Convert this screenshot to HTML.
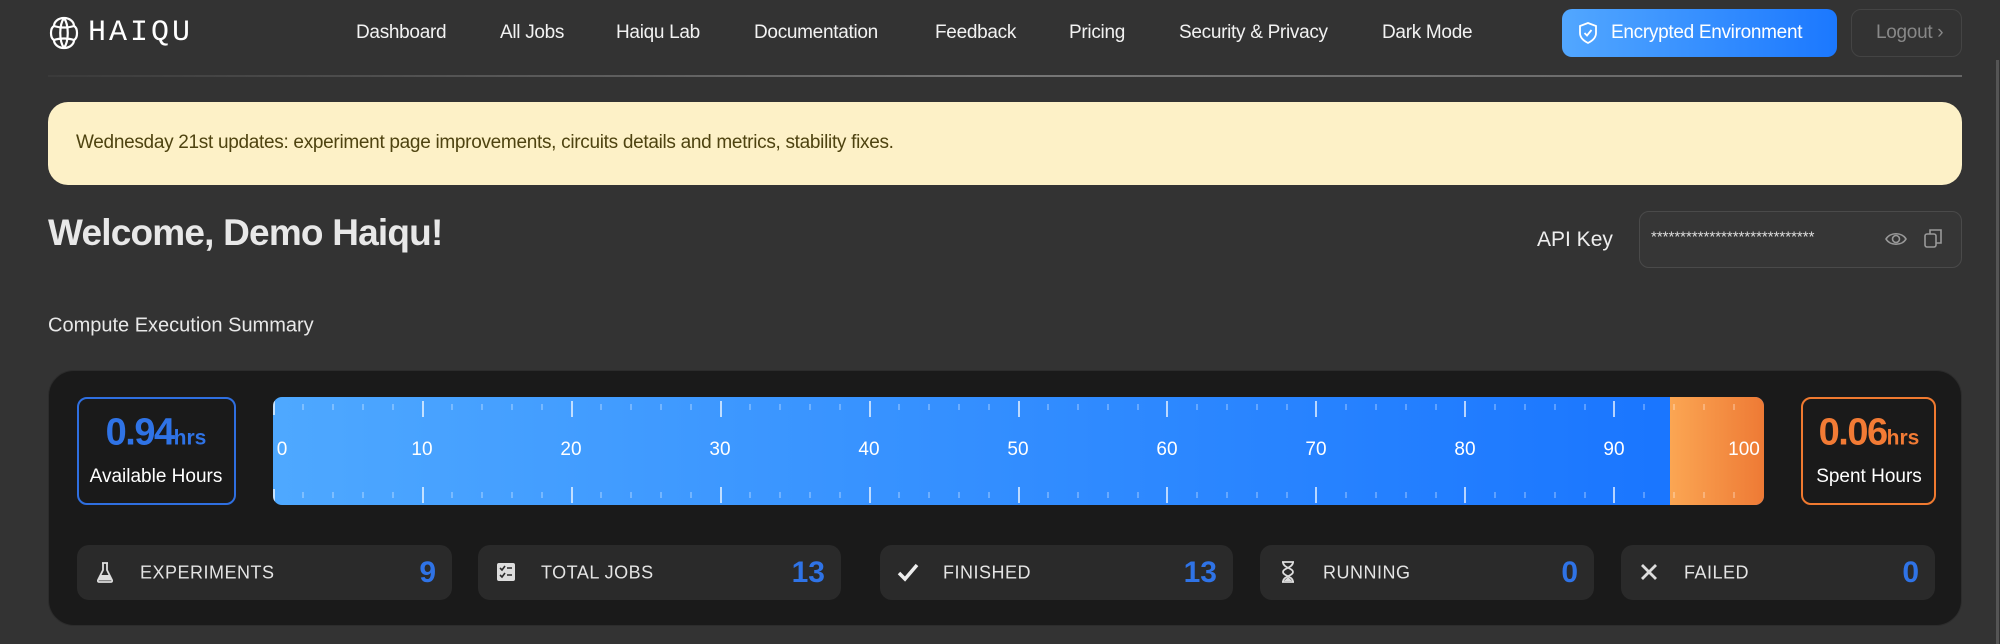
<!DOCTYPE html>
<html><head><meta charset="utf-8"><style>
*{box-sizing:border-box;margin:0;padding:0}
body{width:2000px;height:644px;background:#333;font-family:"Liberation Sans",sans-serif;color:#eee;position:relative;overflow:hidden}
.a{position:absolute}
.nav{top:33px;transform:translateY(-50%);font-size:19px;color:#f2f2f2;letter-spacing:-0.3px}
.pill{position:absolute;top:545px;height:55px;background:#2a2a2a;border-radius:12px}
.pill .ic{position:absolute;left:16px;top:15px;width:24px;height:24px}
.pill .lb{position:absolute;left:63px;top:50%;transform:translateY(-50%);font-size:18px;color:#e4e4e4;letter-spacing:0.5px}
.pill .n{position:absolute;right:16px;top:50%;transform:translateY(-50%);font-size:30px;color:#2f73e6;font-weight:bold}
.lbl{position:absolute;top:450px;transform:translate(-50%,-50%);font-size:19px;color:#fff}
</style></head><body>
<svg class="a" style="left:48px;top:15px" width="32" height="36" viewBox="0 0 32 36" fill="none" stroke="#fff" stroke-width="2.2">
<path d="M16 3 C22 3 26 7 26 11 C30 13 30 23 26 25 C26 29 22 33 16 33 C10 33 6 29 6 25 C2 23 2 13 6 11 C6 7 10 3 16 3Z"/>
<path d="M6 11 C12 13 20 13 26 11 M6 25 C12 23 20 23 26 25 M16 3 C11 10 11 26 16 33 M16 3 C21 10 21 26 16 33"/>
</svg>
<div class="a" style="left:88px;top:16px;font-family:'Liberation Mono',monospace;font-size:30px;letter-spacing:3px;color:#fff">HAIQU</div>
<div class="a nav" style="left:356px">Dashboard</div>
<div class="a nav" style="left:500px">All Jobs</div>
<div class="a nav" style="left:616px">Haiqu Lab</div>
<div class="a nav" style="left:754px">Documentation</div>
<div class="a nav" style="left:935px">Feedback</div>
<div class="a nav" style="left:1069px">Pricing</div>
<div class="a nav" style="left:1179px">Security &amp; Privacy</div>
<div class="a nav" style="left:1382px">Dark Mode</div>
<div class="a" style="left:1562px;top:9px;width:275px;height:48px;border-radius:10px;background:linear-gradient(90deg,#52a7ff,#1b78ff)"></div>
<svg class="a" style="left:1577px;top:21px" width="22" height="24" viewBox="0 0 22 24" fill="none" stroke="#fff" stroke-width="1.8"><path d="M11 2 L19 5 V12 C19 17 15 20 11 22 C7 20 3 17 3 12 V5 Z"/><path d="M7.5 12 L10 14.5 L14.5 9"/></svg>
<div class="a nav" style="left:1611px;color:#fff">Encrypted Environment</div>
<div class="a" style="left:1851px;top:9px;width:111px;height:48px;border-radius:10px;border:1px solid #444"></div>
<div class="a nav" style="left:1876px;color:#888">Logout ›</div>
<div class="a" style="left:48px;top:75px;width:1914px;height:2px;background:linear-gradient(90deg,#3a3a3a,#777 50%,#666)"></div>
<div class="a" style="left:1996px;top:60px;width:3px;height:584px;background:#555"></div>
<div class="a" style="left:48px;top:102px;width:1914px;height:83px;border-radius:20px;background:#fdf1c7"></div>
<div class="a" style="left:76px;top:143px;transform:translateY(-50%);font-size:19px;color:#4e4310;letter-spacing:-0.3px">Wednesday 21st updates: experiment page improvements, circuits details and metrics, stability fixes.</div>
<div class="a" style="left:48px;top:233px;transform:translateY(-50%);font-size:37px;font-weight:bold;color:#e8e8e8;letter-spacing:-0.8px">Welcome, Demo Haiqu!</div>
<div class="a" style="left:1537px;top:240px;transform:translateY(-50%);font-size:21px;color:#eee">API Key</div>
<div class="a" style="left:1639px;top:211px;width:323px;height:57px;border-radius:10px;background:#363636;border:1px solid #4a4a4a"></div>
<div class="a" style="left:1651px;top:237px;transform:translateY(-50%);font-size:15px;color:#ddd">****************************</div>
<svg class="a" style="left:1884px;top:228px" width="24" height="22" viewBox="0 0 24 22" fill="none" stroke="#999" stroke-width="1.6"><path d="M2 11 C6 4 18 4 22 11 C18 18 6 18 2 11Z"/><circle cx="12" cy="11" r="3.5"/></svg>
<svg class="a" style="left:1923px;top:227px" width="20" height="22" viewBox="0 0 20 22" fill="none" stroke="#999" stroke-width="1.6"><rect x="2" y="7" width="11" height="13" rx="2"/><path d="M7 7 V3 H18 V16 H13"/></svg>
<div class="a" style="left:48px;top:326px;transform:translateY(-50%);font-size:20px;color:#e8e8e8">Compute Execution Summary</div>
<div class="a" style="left:48px;top:370px;width:1914px;height:256px;border-radius:26px;background:#1a1a1a;border:1px solid #2c2c2c"></div>
<div class="a" style="left:77px;top:397px;width:159px;height:108px;border-radius:10px;border:2px solid #2f6fe0"></div>
<div class="a" style="left:156px;top:433px;transform:translate(-50%,-50%);color:#2f73e6;white-space:nowrap;font-weight:bold"><span style="font-size:38px;letter-spacing:-1.5px">0.94</span><span style="font-size:21px">hrs</span></div>
<div class="a" style="left:156px;top:477px;transform:translate(-50%,-50%);font-size:19px;color:#fff;white-space:nowrap">Available Hours</div>
<div class="a" style="left:1801px;top:397px;width:135px;height:108px;border-radius:10px;border:2px solid #f07a30"></div>
<div class="a" style="left:1869px;top:433px;transform:translate(-50%,-50%);color:#f27b35;white-space:nowrap;font-weight:bold"><span style="font-size:38px;letter-spacing:-1.5px">0.06</span><span style="font-size:21px">hrs</span></div>
<div class="a" style="left:1869px;top:477px;transform:translate(-50%,-50%);font-size:19px;color:#fff;white-space:nowrap">Spent Hours</div>
<div class="a" style="left:273px;top:397px;width:1491px;height:108px;border-radius:9px;overflow:hidden;background:linear-gradient(90deg,#4ea8ff,#1a76ff 93%)">
<div class="a" style="left:1397px;top:0;width:94px;height:108px;background:linear-gradient(90deg,#fba653,#ee7a35)"></div>
<svg class="a" style="left:0;top:0" width="1491" height="108">
<g stroke="#fff" stroke-width="1.5" opacity="0.9">
<path d="M1 4V18M150 4V20M299 4V20M448 4V20M597 4V20M746 4V20M894 4V20M1043 4V20M1192 4V20M1341 4V20M1 92V106M150 90V106M299 90V106M448 90V106M597 90V106M746 90V106M894 90V106M1043 90V106M1192 90V106M1341 90V106"/>
</g>
<g stroke="#fff" stroke-width="1" opacity="0.55">
<path d="M30 7V13M60 7V13M90 7V13M120 7V13M179 7V13M209 7V13M239 7V13M269 7V13M328 7V13M358 7V13M388 7V13M418 7V13M477 7V13M507 7V13M537 7V13M567 7V13M626 7V13M656 7V13M686 7V13M716 7V13M775 7V13M805 7V13M835 7V13M865 7V13M924 7V13M954 7V13M984 7V13M1014 7V13M1073 7V13M1103 7V13M1133 7V13M1163 7V13M1222 7V13M1252 7V13M1282 7V13M1312 7V13M1371 7V13M1401 7V13M1431 7V13M1461 7V13"/>
<path d="M30 95V101M60 95V101M90 95V101M120 95V101M179 95V101M209 95V101M239 95V101M269 95V101M328 95V101M358 95V101M388 95V101M418 95V101M477 95V101M507 95V101M537 95V101M567 95V101M626 95V101M656 95V101M686 95V101M716 95V101M775 95V101M805 95V101M835 95V101M865 95V101M924 95V101M954 95V101M984 95V101M1014 95V101M1073 95V101M1103 95V101M1133 95V101M1163 95V101M1222 95V101M1252 95V101M1282 95V101M1312 95V101M1371 95V101M1401 95V101M1431 95V101M1461 95V101"/>
</g></svg>
</div>
<div class="lbl" style="left:282px">0</div>
<div class="lbl" style="left:422px">10</div>
<div class="lbl" style="left:571px">20</div>
<div class="lbl" style="left:720px">30</div>
<div class="lbl" style="left:869px">40</div>
<div class="lbl" style="left:1018px">50</div>
<div class="lbl" style="left:1167px">60</div>
<div class="lbl" style="left:1316px">70</div>
<div class="lbl" style="left:1465px">80</div>
<div class="lbl" style="left:1614px">90</div>
<div class="lbl" style="left:1744px">100</div>
<div class="pill" style="left:77px;width:375px">
<svg class="ic" viewBox="0 0 24 24"><path d="M9 3H15M10 3V10L5 20C4.5 21 5 22 6 22H18C19 22 19.5 21 19 20L14 10V3" fill="none" stroke="#ddd" stroke-width="1.8"/><path d="M7.5 15H16.5L18.5 20.5H5.5Z" fill="#ddd"/></svg>
<div class="lb">EXPERIMENTS</div><div class="n">9</div></div>
<div class="pill" style="left:478px;width:363px">
<svg class="ic" viewBox="0 0 24 24"><rect x="3" y="3" width="18" height="18" rx="2" fill="#ddd"/><path d="M6 8L8 10L11 6M13 8H18M6 15L8 17L11 13M13 15H18" stroke="#2a2a2a" stroke-width="1.6" fill="none"/></svg>
<div class="lb">TOTAL JOBS</div><div class="n">13</div></div>
<div class="pill" style="left:880px;width:353px">
<svg class="ic" viewBox="0 0 24 24"><path d="M3 13L9 19L21 5" fill="none" stroke="#eee" stroke-width="3.5"/></svg>
<div class="lb">FINISHED</div><div class="n">13</div></div>
<div class="pill" style="left:1260px;width:334px">
<svg class="ic" viewBox="0 0 24 24"><path d="M6 2H18M6 22H18M7 2C7 8 17 8 17 12C17 16 7 16 7 22M17 2C17 8 7 8 7 12C7 16 17 16 17 22" fill="none" stroke="#ddd" stroke-width="1.8"/><path d="M8 21L12 17L16 21Z" fill="#ddd"/></svg>
<div class="lb">RUNNING</div><div class="n">0</div></div>
<div class="pill" style="left:1621px;width:314px">
<svg class="ic" viewBox="0 0 24 24"><path d="M5 5L19 19M19 5L5 19" stroke="#ddd" stroke-width="2.8"/></svg>
<div class="lb">FAILED</div><div class="n">0</div></div>
</body></html>
